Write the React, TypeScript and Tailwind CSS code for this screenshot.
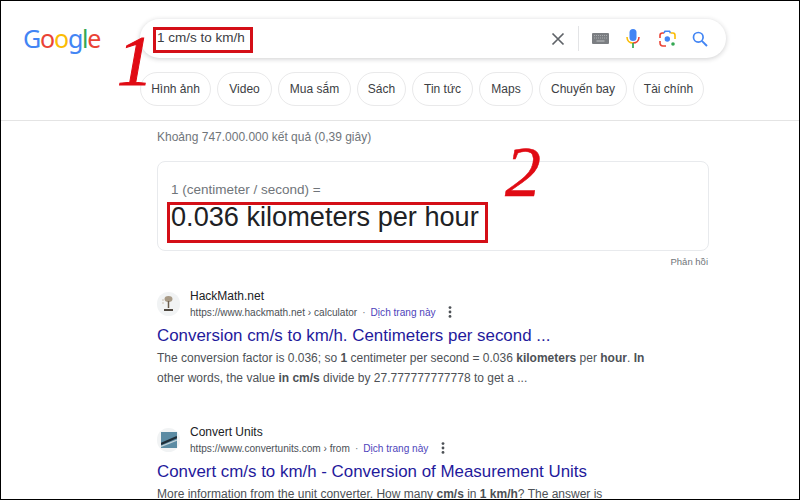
import React from "react";

const chips = [
  ["Hình ảnh", "w-[71px]"],
  ["Video", "w-[55px]"],
  ["Mua sắm", "w-[73px]"],
  ["Sách", "w-[49px]"],
  ["Tin tức", "w-[61px]"],
  ["Maps", "w-[54px]"],
  ["Chuyến bay", "w-[88px]"],
  ["Tài chính", "w-[71px]"],
];

function Kebab() {
  return (
    <svg width="4" height="12" viewBox="0 0 4 12" className="shrink-0">
      <circle cx="2" cy="1.6" r="1.4" fill="#4d5156" />
      <circle cx="2" cy="6" r="1.4" fill="#4d5156" />
      <circle cx="2" cy="10.4" r="1.4" fill="#4d5156" />
    </svg>
  );
}

function Result({ favicon, site, url, urlGap, title, children }: { favicon: React.ReactNode; site: string; url: string; urlGap: string; title: string; children: React.ReactNode }) {
  return (
    <div className="flex flex-col">
      <div className="flex items-center h-[33px]">
        <div className="w-[23px] h-6 rounded-full bg-[#f1f3f4] flex items-center justify-center mr-[10px] shrink-0">{favicon}</div>
        <div className="flex flex-col">
          <div className="text-[12px] leading-[17px] text-[#202124]">{site}</div>
          <div className="flex items-center text-[10.1px] leading-[15px] text-[#4d5156] whitespace-nowrap">
            <span>{url}</span>
            <span className="mx-[5px] text-[#70757a]">·</span>
            <span className={`text-[#1a0dab] opacity-80 ${urlGap}`}>Dịch trang này</span>
            <Kebab />
          </div>
        </div>
      </div>
      <div className="text-[16.9px] leading-[24px] text-[#1f1a9c] mt-[4px] whitespace-nowrap">{title}</div>
      <div className="text-[12px] leading-[20px] text-[#4d5156] whitespace-nowrap">{children}</div>
    </div>
  );
}

export default function App() {
  return (
    <div className="w-[800px] h-[500px] overflow-hidden relative bg-white border border-black text-[#202124]" style={{ fontFamily: '"Liberation Sans", Arial, sans-serif' }}>
      <header className="h-[119px] border-b border-[#e4e4e4] flex flex-col box-content">
        <div className="flex items-start pt-[18px]">
          <div className="w-[139px] pl-[22px] pt-[2px] text-[25px] leading-[34px] tracking-[-1.2px]" style={{ fontFamily: '"Noto Sans", sans-serif' }}>
            <span className="text-[#4285f4]">G</span>
            <span className="text-[#ea4335]">o</span>
            <span className="text-[#fbbc05]">o</span>
            <span className="text-[#4285f4]">g</span>
            <span className="text-[#34a853]">l</span>
            <span className="text-[#ea4335]">e</span>
          </div>
          <div className="w-[586px] h-[39px] rounded-full bg-white shadow-[0_1px_5px_rgba(32,33,36,0.22)] flex items-center pl-[17px] pr-[18px]">
            <span className="text-[13.5px] text-[#3c4043] flex-1 -mt-[1px]">1 cm/s to km/h</span>
            <svg width="14" height="14" viewBox="0 0 14 14" className="shrink-0 mr-[13px]">
              <path d="M1.5 1.5 12.5 12.5M12.5 1.5 1.5 12.5" stroke="#5f6368" strokeWidth="1.7" />
            </svg>
            <div className="w-px h-[25px] bg-[#e3e4e6] mr-[13px]" />
            <svg width="17" height="11" viewBox="0 0 17 11" className="shrink-0 mr-[17px]">
              <rect width="17" height="11" rx="1" fill="#7b7e82" />
              <path d="M2 2.5h13M2 5h13" stroke="#a9abae" strokeWidth="1" strokeDasharray="1 1" />
              <path d="M4.500 8h8" stroke="#b5b7ba" strokeWidth="1.200" />
            </svg>
            <svg width="14" height="19" viewBox="0 0 14 19" className="shrink-0 mr-[19px]">
              <rect x="3.500" y="0" width="7" height="12" rx="3.500" fill="#4285f4" />
              <path d="M1 8c0 3.500 2.600 6 6 6" stroke="#fbbc05" strokeWidth="1.600" fill="none" />
              <path d="M13 8c0 3.500-2.600 6-6 6" stroke="#ea4335" strokeWidth="1.600" fill="none" />
              <path d="M7 14v5" stroke="#34a853" strokeWidth="1.700" />
            </svg>
            <svg width="17" height="17" viewBox="0 0 17 17" className="shrink-0 mr-[16px]">
              <path d="M1 8V5.500C1 4 2 3 3.500 3H5" stroke="#ea4335" strokeWidth="1.600" fill="none" />
              <path d="M1 11v1.500C1 14.500 2.200 16 4 16h3" stroke="#ea4335" strokeWidth="1.600" fill="none" />
              <path d="M5 3 6 1.200h4.500L11.500 3" stroke="#4285f4" strokeWidth="1.600" fill="none" />
              <path d="M11.500 3H14c1.200 0 2 1 2 2.500V9" stroke="#fbbc05" strokeWidth="1.600" fill="none" />
              <circle cx="8.300" cy="9" r="2.700" fill="#4285f4" />
              <circle cx="14" cy="14" r="1.800" fill="#34a853" />
            </svg>
            <svg width="16" height="16" viewBox="0 0 16 16" className="shrink-0">
              <circle cx="6.300" cy="6.300" r="4.800" stroke="#4285f4" strokeWidth="1.700" fill="none" />
              <path d="M9.800 9.800 15 15" stroke="#4285f4" strokeWidth="1.900" />
            </svg>
          </div>
        </div>
        <nav className="flex gap-[6px] ml-[139px] mt-[14px]">
          {chips.map(([label, w]) => (
            <div key={label} className={`${w} h-[34px] rounded-full border border-[#e9e9ea] flex items-center justify-center text-[12px] text-[#3c4043] whitespace-nowrap`}>
              {label}
            </div>
          ))}
        </nav>
      </header>

      <main className="ml-[156px] w-[552px]">
        <div className="text-[12px] leading-[14px] text-[#70757a] mt-[9px]">Khoảng 747.000.000 kết quả (0,39 giây)</div>
        <section className="h-[90px] mt-[17px] rounded-lg border border-[#e8eaed] pl-[13px] pt-[20px]">
          <div className="text-[13.5px] leading-[15px] text-[#70757a]">1 (centimeter / second) =</div>
          <div className="text-[27.15px] leading-[30px] text-[#202124] mt-[5px] whitespace-nowrap">0.036 kilometers per hour</div>
        </section>
        <div className="text-[9.5px] leading-[12px] text-[#70757a] text-right mt-[5px] pr-px">Phản hồi</div>

        <div className="mt-[19px]">
          <Result
            favicon={
              <svg width="15" height="17" viewBox="0 0 15 17">
                <ellipse cx="7.500" cy="4" rx="4" ry="3" fill="#a89a86" />
                <path d="M7.500 6v7" stroke="#6b5d4d" strokeWidth="1.500" />
                <path d="M3 15h9" stroke="#3d352c" strokeWidth="1.800" />
                <path d="M1 5h2M1 8h2" stroke="#c9bfb2" strokeWidth="1" />
              </svg>
            }
            site="HackMath.net"
            url="https://www.hackmath.net › calculator"
            urlGap="mr-[12px]"
            title="Conversion cm/s to km/h. Centimeters per second ..."
          >
            <div>The conversion factor is 0.036; so <b>1</b> centimeter per second = 0.036 <b>kilometers</b> per <b>hour</b>. <b>In</b></div>
            <div>other words, the value <b>in cm/s</b> divide by 27.777777777778 to get a ...</div>
          </Result>
        </div>
        <div className="mt-[35px]">
          <Result
            favicon={
              <svg width="16" height="16" viewBox="0 0 16 16">
                <rect width="16" height="16" fill="#5b8ba3" />
                <path d="M0 12 16 5" stroke="#1f2d38" strokeWidth="2.200" />
                <path d="M0 14.500 16 8" stroke="#c5d3da" strokeWidth="1.200" />
              </svg>
            }
            site="Convert Units"
            url="https://www.convertunits.com › from"
            urlGap="mr-[13px]"
            title="Convert cm/s to km/h - Conversion of Measurement Units"
          >
            <div>More information from the unit converter. How many <b>cm/s</b> in <b>1 km/h</b>? The answer is</div>
          </Result>
        </div>
      </main>

      {/* annotations layered on top of the screenshot */}
      <div className="absolute left-[152px] top-[26px] w-[100px] h-[26px] border-[3px] border-[#d40f17]" />
      <div className="absolute left-[166px] top-[201px] w-[321px] h-[41px] border-[3px] border-[#d40f17]" />
      <div className="absolute left-[116px] top-[24px] text-[72px] leading-[72px] italic text-[#e00b14] [-webkit-text-stroke:1px_#e00b14]" style={{ fontFamily: '"Liberation Serif", serif' }}>1</div>
      <div className="absolute left-[504px] top-[135px] text-[72px] leading-[72px] italic text-[#e00b14] [-webkit-text-stroke:0.5px_#e00b14]" style={{ fontFamily: '"Liberation Serif", serif' }}>2</div>
    </div>
  );
}
